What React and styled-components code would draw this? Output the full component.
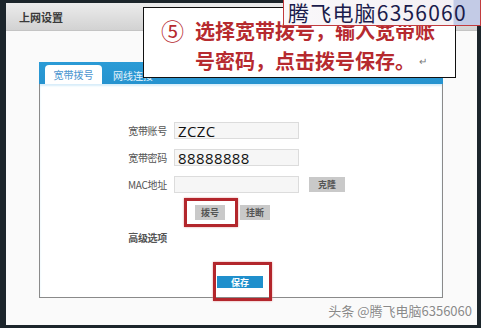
import React from 'react';
import styled, { createGlobalStyle } from 'styled-components';

const Global = createGlobalStyle`
  html, body { margin: 0; padding: 0; background: #e9e9e9; }
  body { font-family: "Noto Sans CJK SC", "Noto Sans", sans-serif; }
`;

const Screen = styled.div`
  position: relative;
  width: 481px;
  height: 328px;
  overflow: hidden;
  background: #1c252b;
  padding: 3px 4px 0 6px;
  box-sizing: border-box;
`;

const Win = styled.div`
  height: 322px;
  display: flex;
  flex-direction: column;
  background: #f7f7f7;
`;

const Header = styled.div`
  height: 27px;
  display: flex;
  align-items: center;
  padding-left: 13px;
  background: linear-gradient(#ececec, #d2d2d2);
  border-bottom: 1px solid #c4c4c4;
  font-size: 11px;
  font-weight: 700;
  color: #3a3a3a;
`;

const Body = styled.div`
  flex: 1;
  padding: 31px 34px 0 33px;
  background: #fafafa;
`;

const Panel = styled.div`
  height: 236px;
  display: flex;
  flex-direction: column;
`;

const TabBar = styled.div`
  height: 22px;
  display: flex;
  align-items: flex-end;
  gap: 11px;
  padding-left: 6px;
  background: linear-gradient(#2b9bd6, #2693cf);
`;

const Tab = styled.div`
  height: ${p => (p.$active ? '19px' : '18px')};
  width: ${p => (p.$active ? '57px' : 'auto')};
  display: flex;
  align-items: center;
  justify-content: center;
  font-size: 10px;
  color: ${p => (p.$active ? '#4b95cf' : '#e6f4fc')};
  background: ${p => (p.$active ? '#fff' : 'transparent')};
  border-radius: 4px 4px 0 0;
`;

const Form = styled.div`
  flex: 1;
  display: flex;
  flex-direction: column;
  background: #fff;
  border: 1px solid #8a8a8a;
  border-top: none;
  padding-top: 38px;
  box-shadow: inset 0 2px 2px #d8eefa;
`;

const Row = styled.div`
  display: grid;
  grid-template-columns: 127px max-content max-content;
  justify-content: start;
  column-gap: 7px;
  align-items: center;
  height: 17px;
  margin-bottom: 10px;
`;

const Label = styled.div`
  text-align: right;
  font-size: 10px;
  color: #555;
  font-weight: ${p => (p.$bold ? 600 : 400)};
  letter-spacing: -0.3px;
`;

const Input = styled.div`
  box-sizing: border-box;
  width: 125px;
  height: 17px;
  border: 1px solid #dcdcdc;
  background: #f6f6f6;
  display: flex;
  align-items: center;
  padding-left: 3px;
  font-family: "Open Sans", sans-serif;
  font-size: 15px;
  color: #111;
  letter-spacing: 0.4px;
`;

const GrayBtn = styled.div`
  width: ${p => p.$w || 31}px;
  height: 15px;
  margin-left: ${p => p.$ml || 0}px;
  background: #c9c9c9;
  display: flex;
  align-items: center;
  justify-content: center;
  font-size: 9px;
  font-weight: 700;
  color: #555;
`;

const BtnRow = styled.div`
  display: flex;
  align-items: center;
  gap: 2px;
  margin-left: 144px;
  margin-top: -5px;
`;

const Mark = styled.div`
  border: 3px solid #b3262c;
  padding: ${p => p.$pad};
  display: flex;
  box-shadow: 0 0 2px #e49a9a;
`;

const AdvRow = styled.div`
  display: grid;
  grid-template-columns: 127px;
  margin-top: 3px;
`;

const SaveWrap = styled.div`
  margin-top: auto;
  margin-left: 173px;
  margin-bottom: -4px;
  align-self: flex-start;
`;

const SaveBtn = styled.div`
  width: 46px;
  height: 12px;
  background: #1f8fcc;
  color: #fff;
  font-size: 9px;
  font-weight: 700;
  display: flex;
  align-items: center;
  justify-content: center;
`;

const Callout = styled.div`
  position: absolute;
  left: 143px;
  top: 7px;
  width: 311px;
  height: 69px;
  background: #fff;
  border: 1.5px solid #111;
  display: flex;
  flex-direction: column;
  gap: 3px;
  font-weight: 700;
  font-size: 20px;
  color: #b62a2f;
  line-height: 27px;
`;

const Line = styled.div`
  display: flex;
  align-items: center;
  white-space: nowrap;
  padding-left: ${p => p.$pl}px;
  margin-top: ${p => p.$mt || 0}px;
`;

const Circled = styled.span`
  font-size: 23px;
  font-weight: 400;
  margin-right: 11px;
`;

const Ret = styled.span`
  font-size: 10px;
  color: #777;
  font-weight: 400;
  margin-left: 4px;
`;

const Brand = styled.div`
  position: absolute;
  left: 283px;
  top: 0;
  box-sizing: border-box;
  width: 198px;
  height: 26px;
  border: 1px solid #c23b3e;
  border-top: none;
  background: linear-gradient(90deg, #faf8fa 0%, #f3f0f4 86%, #c3cbe6 87%, #c3cbe6 100%);
  display: flex;
  align-items: center;
  padding-left: 4px;
  font-size: 21px;
  line-height: 1;
  color: #1b1c4c;
  white-space: nowrap;
  letter-spacing: 1.2px;
`;

const Watermark = styled.div`
  position: absolute;
  right: 9px;
  bottom: 8px;
  font-size: 13px;
  color: #8a8a8a;
  text-shadow: 0 0 2px #fff, 0 0 2px #fff;
  white-space: nowrap;
`;

export default function App() {
  return (
    <>
      <Global />
      <Screen>
        <Win>
          <Header>上网设置</Header>
          <Body>
            <Panel>
              <TabBar>
                <Tab $active>宽带拨号</Tab>
                <Tab>网线连接</Tab>
              </TabBar>
              <Form>
                <Row>
                  <Label>宽带账号</Label>
                  <Input>ZCZC</Input>
                </Row>
                <Row>
                  <Label>宽带密码</Label>
                  <Input>88888888</Input>
                </Row>
                <Row>
                  <Label>MAC地址</Label>
                  <Input />
                  <GrayBtn $w={36} $ml={3}>克隆</GrayBtn>
                </Row>
                <BtnRow>
                  <Mark $pad="4px 10px 4px 8px">
                    <GrayBtn $w={30}>拨号</GrayBtn>
                  </Mark>
                  <GrayBtn $w={30}>挂断</GrayBtn>
                </BtnRow>
                <AdvRow>
                  <Label $bold>高级选项</Label>
                </AdvRow>
                <SaveWrap>
                  <Mark $pad="11px 6px 10px 1px">
                    <SaveBtn>保存</SaveBtn>
                  </Mark>
                </SaveWrap>
              </Form>
            </Panel>
          </Body>
        </Win>
        <Callout>
          <Line $pl={17} $mt={9}>
            <Circled>⑤</Circled>选择宽带拨号，输入宽带账
          </Line>
          <Line $pl={51}>
            号密码，点击拨号保存。<Ret>↵</Ret>
          </Line>
        </Callout>
        <Brand>腾飞电脑6356060</Brand>
        <Watermark>头条 @腾飞电脑6356060</Watermark>
      </Screen>
    </>
  );
}
